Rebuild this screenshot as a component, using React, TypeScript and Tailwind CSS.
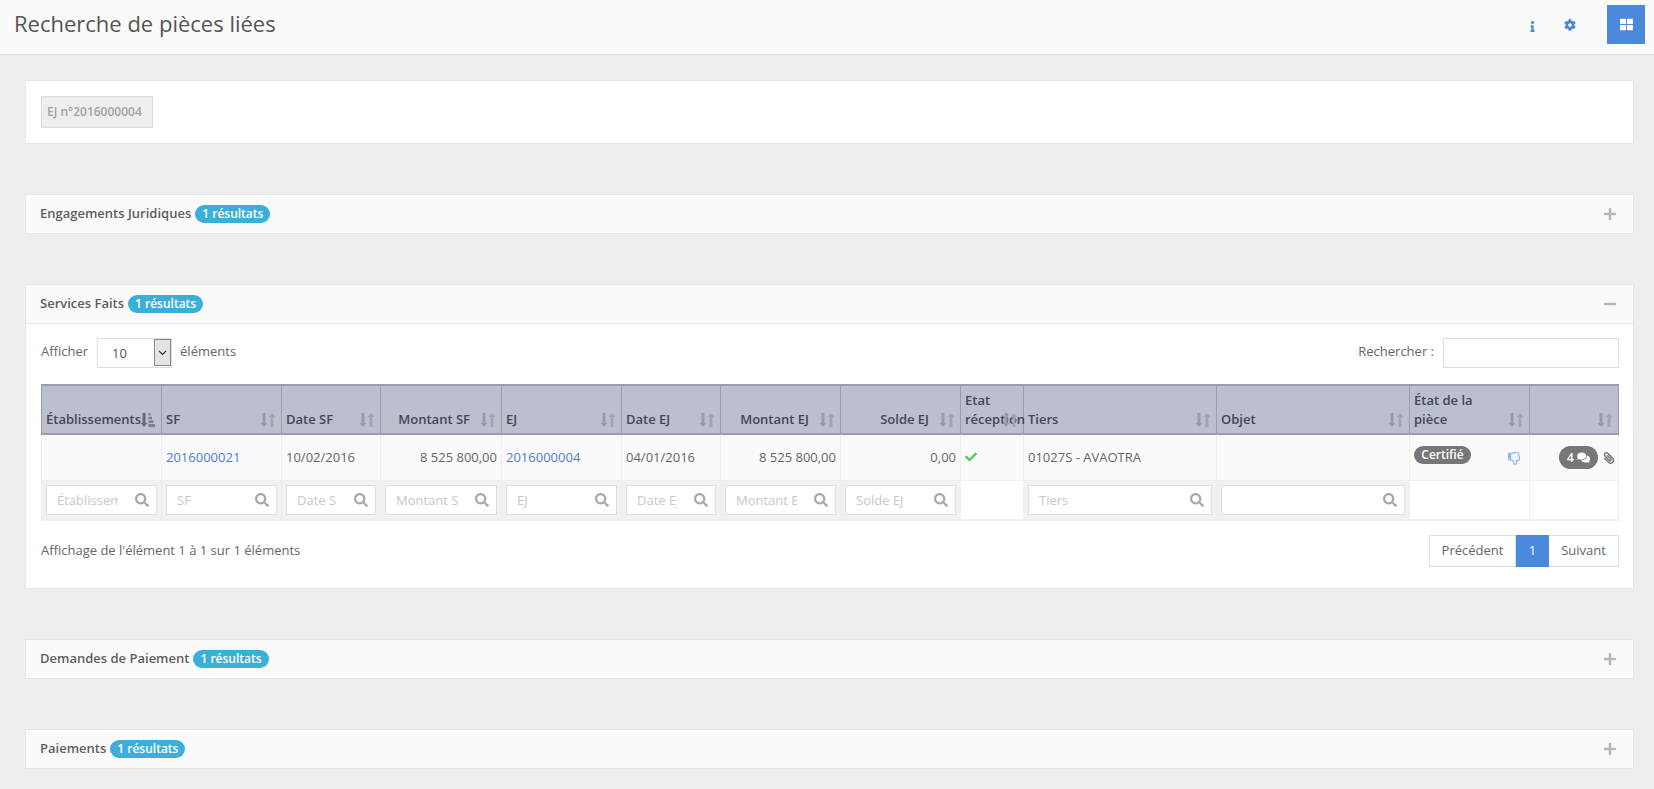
import { FaCheck, FaCog, FaInfo, FaPaperclip, FaMinus, FaPlus, FaRegThumbsDown, FaSearch, FaComments, FaThLarge } from "react-icons/fa";

type Col = { label: string; width: number; right?: boolean; filter?: string };

const cols: Col[] = [
  { label: "Établissements", width: 120, filter: "Établissements" },
  { label: "SF", width: 120, filter: "SF" },
  { label: "Date SF", width: 99, filter: "Date SF" },
  { label: "Montant SF", width: 121, right: true, filter: "Montant SF" },
  { label: "EJ", width: 120, filter: "EJ" },
  { label: "Date EJ", width: 99, filter: "Date EJ" },
  { label: "Montant EJ", width: 120, right: true, filter: "Montant EJ" },
  { label: "Solde EJ", width: 120, right: true, filter: "Solde EJ" },
  { label: "Etat réception", width: 63 },
  { label: "Tiers", width: 193, filter: "Tiers" },
  { label: "Objet", width: 193, filter: "" },
  { label: "État de la pièce", width: 120 },
  { label: "", width: 89 },
];

const SortIcon = ({ active }: { active?: boolean }) => (
  <svg width="14" height="14" viewBox="0 0 14 14" className="absolute right-[6px] bottom-[6px]">
    <path d="M1.500 0h3v10H6.500L3 14-.5 10h2z" fill={active ? "#666a80" : "#9a9cab"} />
    {active ? (
      <path d="M7.500 0h2v2.500h-2zM7.500 3.700h3.500v2.500H7.500zM7.500 7.400h5v2.500h-5zM7.500 11.100H14V14H7.500z" fill="#7d8092" />
    ) : (
      <path d="M9.500 14h3V4H14.500L11 0 7.500 4h2z" fill="#a3a5b4" />
    )}
  </svg>
);

const Badge = () => (
  <span className="ml-[4px] flex h-[18px] items-center rounded-full bg-[#3bafda] px-[7px] text-[12px] font-semibold text-white">
    1 résultats
  </span>
);

const Panel = ({ title, open, mt }: { title: string; open?: boolean; mt: string }) => (
  <div className={`flex h-[40px] items-center justify-between border border-[#e7e7e7] bg-[#fafafa] pl-[14px] pr-[16px] ${mt}`}>
    <div className="flex items-center text-[13px] font-semibold text-[#5e5e5e]">
      <span>{title}</span>
      <Badge />
    </div>
    {open ? <FaMinus className="text-[14px] text-[#b8b8b8]" /> : <FaPlus className="text-[14px] text-[#b8b8b8]" />}
  </div>
);

const FilterInput = ({ placeholder }: { placeholder: string }) => (
  <div className="relative h-[30px]">
    <input
      readOnly
      placeholder={placeholder}
      className="h-full w-full border border-[#dedede] bg-white pl-[10px] pr-[38px] text-[13px] outline-none placeholder:text-[#c8c8c8]"
    />
    <FaSearch className="absolute right-[8px] top-[8px] text-[14px] text-[#a9a9a9]" />
  </div>
);

const App = () => {
  return (
    <div className="min-h-[789px] bg-[#eeeeee] font-['Open_Sans',sans-serif] text-[13px] text-[#666666]">
      {/* Header */}
      <div className="flex h-[55px] items-start justify-between border-b border-[#dfdfdf] bg-[#fafafa] pl-[14px]">
        <h1 className="pt-[8px] text-[22px] leading-[30px] text-[#555555]">Recherche de pièces liées</h1>
        <div className="flex items-start">
          <span className="mr-[24px] mt-[19px] flex h-[14px] w-[14px] items-center justify-center">
            <FaInfo className="text-[11px] text-[#4a89dc]" />
          </span>
          <span className="mr-[30px] mt-[18px] flex h-[14px] w-[14px] items-center justify-center">
            <FaCog className="text-[12px] text-[#4a89dc]" />
          </span>
          <div className="mr-[9px] mt-[5px] flex h-[39px] w-[38px] items-center justify-center bg-[#4a89dc]">
            <FaThLarge className="text-[13px] text-white" />
          </div>
        </div>
      </div>

      <div className="pl-[25px] pr-[20px]">
        {/* Piece reference */}
        <div className="mt-[25px] flex h-[64px] items-start border border-[#e7e7e7] bg-white pl-[15px] pt-[15px]">
          <span className="flex h-[32px] w-[112px] items-center border border-[#dcdcdc] bg-[#eeeeee] pl-[5px] text-[12px] font-semibold whitespace-nowrap text-[#a3a3a3]">
            EJ n°2016000004
          </span>
        </div>

        <Panel title="Engagements Juridiques" mt="mt-[50px]" />

        {/* Services faits */}
        <div className="mt-[50px] border border-[#e7e7e7] bg-white">
          <div className="-m-px">
            <Panel title="Services Faits" open mt="" />
          </div>
          <div className="pl-[15px] pr-[14px] pt-[15px]">
            <div className="flex h-[30px] items-center justify-between">
              <div className="flex items-center">
                <span className="-mt-[3px]">Afficher</span>
                <div className="ml-[9px] flex h-[30px] w-[75px] items-stretch border border-[#dedede] pb-px">
                  <span className="flex-1 pl-[14px] pt-[5px] text-[13px] text-[#555555]">10</span>
                  <span className="flex w-[17px] items-center justify-center border border-[#888888] bg-[#e4e4e4]">
                    <svg width="9" height="6" viewBox="0 0 9 6">
                      <path d="M1 1l3.500 3.500L8 1" fill="none" stroke="#333333" strokeWidth="1.200" />
                    </svg>
                  </span>
                </div>
                <span className="-mt-[3px] ml-[8px]">éléments</span>
              </div>
              <div className="flex items-center">
                <span className="-mt-[3px]">Rechercher :</span>
                <div className="ml-[9px] h-[30px] w-[176px] border border-[#dedede] bg-white" />
              </div>
            </div>

            <table className="mt-[16px] w-[1577px] table-fixed border-collapse">
              <colgroup>
                {cols.map((c, i) => (
                  <col key={i} style={{ width: c.width }} />
                ))}
              </colgroup>
              <thead>
                <tr className="h-[49px] bg-[#bbbfce]">
                  {cols.map((c, i) => (
                    <th
                      key={i}
                      className={`relative border-y-2 border-x border-[#9a9db0] pb-[4px] pl-[4px] align-bottom text-[13px] font-semibold leading-[19px] text-[#45475a] ${c.right ? "pr-[31px] text-right" : "pr-[24px] text-left"}`}
                    >
                      {c.label}
                      <SortIcon active={i === 0} />
                    </th>
                  ))}
                </tr>
              </thead>
              <tbody>
                <tr className="h-[46px] bg-[#fafafa]">
                  <td className="border border-[#efefef]" />
                  <td className="border border-[#efefef] pl-[4px] pr-[4px] text-[#4f7ad1]">2016000021</td>
                  <td className="border border-[#efefef] pl-[4px] pr-[4px]">10/02/2016</td>
                  <td className="border border-[#efefef] pl-[4px] pr-[4px] text-right">8 525 800,00</td>
                  <td className="border border-[#efefef] pl-[4px] pr-[4px] text-[#4f7ad1]">2016000004</td>
                  <td className="border border-[#efefef] pl-[4px] pr-[4px]">04/01/2016</td>
                  <td className="border border-[#efefef] pl-[4px] pr-[4px] text-right">8 525 800,00</td>
                  <td className="border border-[#efefef] pl-[4px] pr-[4px] text-right">0,00</td>
                  <td className="border border-[#efefef] pl-[4px] pr-[4px]">
                    <FaCheck className="text-[12px] text-[#62c462]" />
                  </td>
                  <td className="border border-[#efefef] pl-[4px] pr-[4px]">01027S - AVAOTRA</td>
                  <td className="border border-[#efefef]" />
                  <td className="relative border border-[#efefef] pl-[4px] pr-[4px] pt-[11px] align-top">
                    <span className="flex h-[18px] w-[57px] items-center justify-center rounded-full bg-[#777777] text-[12px] font-semibold text-white">
                      Certifié
                    </span>
                    <FaRegThumbsDown className="absolute right-[8px] top-[17px] text-[13px] text-[#8fb4ea]" />
                  </td>
                  <td className="border border-[#efefef] pr-[3px] pt-[11px] align-top">
                    <div className="flex items-start justify-end gap-[5px]">
                      <span className="flex h-[23px] w-[39px] items-center justify-center gap-[3px] rounded-full bg-[#777777] text-[12px] font-semibold text-white">
                        4 <FaComments className="text-[13px]" />
                      </span>
                      <FaPaperclip className="mt-[6px] -scale-x-100 text-[12px] text-[#777777]" />
                    </div>
                  </td>
                </tr>
                <tr className="h-[40px]">
                  {cols.map((c, i) => (
                    <td
                      key={i}
                      className={`border border-b-2 border-[#efefef] pl-[4px] pr-[4px] ${c.filter !== undefined ? "bg-[#f1f1f1]" : "bg-white"}`}
                    >
                      {c.filter !== undefined && <FilterInput placeholder={c.filter} />}
                    </td>
                  ))}
                </tr>
              </tbody>
            </table>

            <div className="mt-[14px] flex items-center justify-between pb-[21px]">
              <span>Affichage de l'élément 1 à 1 sur 1 éléments</span>
              <div className="flex h-[32px] items-stretch">
                <span className="flex w-[87px] items-center justify-center border border-[#dedede] text-[#666666]">Précédent</span>
                <span className="flex w-[33px] items-center justify-center bg-[#4a89dc] text-white">1</span>
                <span className="flex w-[70px] items-center justify-center border border-l-0 border-[#dedede] text-[#666666]">Suivant</span>
              </div>
            </div>
          </div>
        </div>

        <Panel title="Demandes de Paiement" mt="mt-[50px]" />
        <Panel title="Paiements" mt="mt-[50px]" />
      </div>
    </div>
  );
};

export default App;
